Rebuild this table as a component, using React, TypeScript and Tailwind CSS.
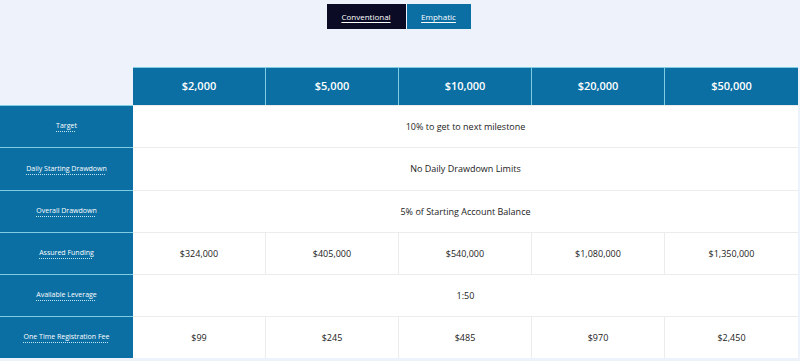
const tiers = ["$2,000", "$5,000", "$10,000", "$20,000", "$50,000"];

type Row = { label: string; values: string[] | string; h: string };

const rows: Row[] = [
  { label: "Target", values: "10% to get to next milestone", h: "h-[42px]" },
  { label: "Daily Starting Drawdown", values: "No Daily Drawdown Limits", h: "h-[43px]" },
  { label: "Overall Drawdown", values: "5% of Starting Account Balance", h: "h-[42px]" },
  {
    label: "Assured Funding",
    values: ["$324,000", "$405,000", "$540,000", "$1,080,000", "$1,350,000"],
    h: "h-[42px]",
  },
  { label: "Available Leverage", values: "1:50", h: "h-[42px]" },
  {
    label: "One Time Registration Fee",
    values: ["$99", "$245", "$485", "$970", "$2,450"],
    h: "h-[42px]",
  },
];

export default function App() {
  return (
    <div
      className="w-[800px] h-[361px] overflow-hidden bg-[#eef3fb] pt-[4px]"
      style={{ fontFamily: '"Open Sans", "Liberation Sans", sans-serif' }}
    >
      {/* Tabs */}
      <div className="flex justify-center pr-[3px]">
        <button className="w-[79px] h-[25px] bg-[#0b0b26] text-[8px] text-white underline underline-offset-2">
          Conventional
        </button>
        <button className="ml-[1px] w-[64px] h-[25px] bg-[#0b6fa4] text-[8px] text-white underline underline-offset-2">
          Emphatic
        </button>
      </div>

      {/* Table */}
      <div className="mt-[38px] w-[798px]">
        {/* Header */}
        <div className="flex h-[38px]">
          <div className="w-[133px]" />
          {tiers.map((t, i) => (
            <div
              key={t}
              className={
                "w-[133px] flex items-center justify-center bg-[#0b6fa4] border-t border-[#7fcde3] text-white text-[11px] font-semibold " +
                (i < tiers.length - 1 ? "border-r" : "")
              }
            >
              {t}
            </div>
          ))}
        </div>

        {/* Body */}
        {rows.map((r) => (
          <div key={r.label} className={"flex " + r.h}>
            <div className="w-[133px] shrink-0 flex items-center justify-center bg-[#0b6fa4] border-t border-[#7fcde3]">
              <span className="text-[7px] text-white underline decoration-dotted decoration-[#bfe6f3] underline-offset-[3px]">
                {r.label}
              </span>
            </div>
            {typeof r.values === "string" ? (
              <div className="flex-1 flex items-center justify-center bg-white border-t border-[#ececec] text-[9px] text-[#222]">
                {r.values}
              </div>
            ) : (
              r.values.map((v, i) => (
                <div
                  key={i}
                  className={
                    "w-[133px] flex items-center justify-center bg-white border-t border-[#ececec] text-[9px] text-[#222] " +
                    (i < 4 ? "border-r" : "")
                  }
                >
                  {v}
                </div>
              ))
            )}
          </div>
        ))}
      </div>
    </div>
  );
}
